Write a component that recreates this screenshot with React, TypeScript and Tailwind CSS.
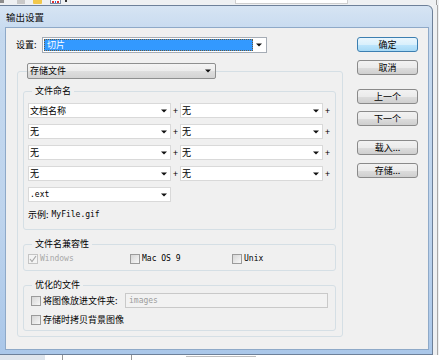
import React from "react";

function Arrow() {
  return (
    <svg width="6" height="4" viewBox="0 0 6 4">
      <path d="M0 0.5H6L3 3.5Z" fill="#111" />
    </svg>
  );
}

function Combo({ text, w, mono }: { text: string; w: string; mono?: boolean }) {
  return (
    <div
      className={`flex h-[15px] items-center justify-between border border-[#d9d9d9] bg-white pl-[1px] pr-[3px] ${w}`}
    >
      <span
        className={
          mono
            ? "font-['DejaVu_Sans_Mono',monospace] text-[8px] leading-[12px]"
            : "text-[9px] leading-[12px]"
        }
      >
        {text}
      </span>
      <Arrow />
    </div>
  );
}

function Plus() {
  return <span className="flex w-[9px] justify-center text-[9px] leading-[12px]">+</span>;
}

function Check({ checked, disabled }: { checked?: boolean; disabled?: boolean }) {
  return (
    <span
      className={`flex h-[10px] w-[10px] shrink-0 items-center justify-center border ${
        disabled
          ? "border-[#c4c4c4] bg-[#f4f4f4]"
          : "border-[#9b9b9b] bg-[linear-gradient(135deg,#d6d6d6,#f7f7f7)]"
      }`}
    >
      {checked && (
        <svg width="8" height="8" viewBox="0 0 8 8">
          <path d="M1 4L3 6.5L7 1" fill="none" stroke="#a8a8a8" strokeWidth="1.2" />
        </svg>
      )}
    </span>
  );
}

function Btn({ label, primary }: { label: string; primary?: boolean }) {
  return (
    <div
      className={`flex h-[15px] w-[61px] items-center justify-center rounded-[3px] border text-[9px] leading-[12px] ${
        primary
          ? "border-[#3c7fb1] bg-[linear-gradient(#eaf6fd_0%,#d9f0fc_50%,#bee6fd_51%,#a7d9f5_100%)]"
          : "border-[#8a8a8a] bg-[linear-gradient(#f2f2f2_0%,#ebebeb_50%,#dddddd_51%,#cfcfcf_100%)]"
      }`}
    >
      {label}
    </div>
  );
}

function TopStrip() {
  return (
    <div className="flex h-[5px] items-start bg-[#eef0f2]">
      <div className="h-[3px] w-[4px] bg-[#8d8d8d]" />
      <div className="ml-[13px] h-[4px] w-[8px] bg-[#c9c9c9]" />
      <div className="ml-[8px] h-[4px] w-[9px] rounded-b-[1px] bg-[#f2c84b]" />
      <div className="ml-[8px] flex h-[4px] w-[11px] items-end gap-[1px] border-x border-b border-[#7e8fa6] bg-white px-[1px]">
        <span className="h-[2px] w-[2px] bg-[#d33]" />
        <span className="h-[2px] w-[2px] bg-[#36c]" />
        <span className="h-[2px] w-[2px] bg-[#d33]" />
      </div>
      <div className="ml-[4px] h-[2px] w-[2px] bg-[#333]" />
      <div className="ml-[168px] h-[4px] w-[113px] border-x border-b border-[#cfcfcf] bg-white" />
      <div className="ml-[88px] h-[5px] w-[1px] bg-[#9a9a9a]" />
    </div>
  );
}

function Dialog() {
  return (
    <div className="flex h-[350px] w-[433px] flex-col rounded-tr-[6px] border border-l-0 border-[#6d8099] bg-[linear-gradient(#d6e4f3,#c5d9ef_8%,#bed4ed_60%,#aac7e9)] pb-[4px] pl-[5px] pr-[3px]">
      <div className="flex h-[21px] items-center pl-[1px] text-[9.5px] leading-[12px] text-[#111]">
        输出设置
      </div>
      <div className="flex h-[323px] w-[424px] border border-[#8ea9c8] bg-[#f0f0f0] pl-[10px] pt-[9px]">
        <div className="flex w-[327px] flex-col">
          <div className="flex h-[16px] items-center">
            <span className="w-[26px] text-[9px] leading-[12px]">设置:</span>
            <div className="flex h-[16px] w-[225px] items-center border border-[#a5acb5] bg-white pl-[1px] pr-[4px]">
              <div className="flex h-[12px] w-[209px] items-center border border-dotted border-[#6d5a3a] bg-[#3399ff] pl-[2px] text-[9px] leading-[12px] text-white">
                切片
              </div>
              <div className="flex flex-1 justify-end">
                <Arrow />
              </div>
            </div>
          </div>

          <fieldset className="ml-[1px] mt-[10px] w-[326px] rounded-[3px] border border-[#d5dfe5]">
            <legend className="ml-[9px]">
              <div className="flex h-[16px] w-[189px] items-center justify-between rounded-[2px] border border-[#8e8f8f] bg-[linear-gradient(#f4f4f4_0%,#ececec_50%,#dedede_51%,#d3d3d3_100%)] pl-[2px] pr-[4px] text-[9px] leading-[12px]">
                <span>存储文件</span>
                <Arrow />
              </div>
            </legend>
            <div className="flex flex-col pb-[5px] pl-[5px] pt-[6px]">
              <fieldset className="w-[313px] rounded-[3px] border border-[#d5dfe5]">
                <legend className="ml-[8px] px-[3px] text-[9px] leading-[12px]">文件命名</legend>
                <div className="flex flex-col gap-[6px] pb-[8px] pl-[4px] pt-[6px]">
                  <div className="flex items-center">
                    <Combo text="文档名称" w="w-[143px]" />
                    <Plus />
                    <Combo text="无" w="w-[143px]" />
                    <Plus />
                  </div>
                  {[0, 1, 2].map((i) => (
                    <div key={i} className="flex items-center">
                      <Combo text="无" w="w-[143px]" />
                      <Plus />
                      <Combo text="无" w="w-[143px]" />
                      <Plus />
                    </div>
                  ))}
                  <Combo text=".ext" w="w-[143px]" mono />
                  <div className="mt-[1px] flex items-center text-[9px] leading-[12px]">
                    <span>示例:</span>
                    <span className="ml-[3px] font-['DejaVu_Sans_Mono',monospace] text-[8px]">MyFile.gif</span>
                  </div>
                </div>
              </fieldset>

              <fieldset className="mt-[8px] w-[313px] rounded-[3px] border border-[#d5dfe5]">
                <legend className="ml-[8px] px-[3px] text-[9px] leading-[12px]">文件名兼容性</legend>
                <div className="grid grid-cols-[102px_102px_auto] pb-[5px] pl-[4px] pt-[3px] font-['DejaVu_Sans_Mono',monospace] text-[8px] leading-[12px]">
                  <div className="flex h-[12px] items-center gap-[2px] text-[#a8a8a8]">
                    <Check checked disabled />
                    <span>Windows</span>
                  </div>
                  <div className="flex h-[12px] items-center gap-[2px]">
                    <Check />
                    <span>Mac OS 9</span>
                  </div>
                  <div className="flex h-[12px] items-center gap-[2px]">
                    <Check />
                    <span>Unix</span>
                  </div>
                </div>
              </fieldset>

              <fieldset className="mt-[8px] w-[313px] rounded-[3px] border border-[#d5dfe5]">
                <legend className="ml-[8px] px-[3px] text-[9px] leading-[12px]">优化的文件</legend>
                <div className="flex flex-col gap-[5px] pb-[3px] pl-[7px] pt-[2px] text-[9px] leading-[12px]">
                  <div className="flex h-[15px] items-center">
                    <Check />
                    <span className="ml-[2px] w-[82px]">将图像放进文件夹:</span>
                    <div className="flex h-[15px] w-[203px] items-center border border-[#c9c9c9] bg-[#f2f2f2] pl-[3px] font-['DejaVu_Sans_Mono',monospace] text-[8px] text-[#9d9d9d]">
                      images
                    </div>
                  </div>
                  <div className="flex h-[14px] items-center">
                    <Check />
                    <span className="ml-[2px]">存储时拷贝背景图像</span>
                  </div>
                </div>
              </fieldset>
            </div>
          </fieldset>
        </div>

        <div className="ml-[14px] flex flex-col">
          <Btn label="确定" primary />
          <div className="mt-[8px]">
            <Btn label="取消" />
          </div>
          <div className="mt-[14px]">
            <Btn label="上一个" />
          </div>
          <div className="mt-[7px]">
            <Btn label="下一个" />
          </div>
          <div className="mt-[14px]">
            <Btn label="载入..." />
          </div>
          <div className="mt-[8px]">
            <Btn label="存储..." />
          </div>
        </div>
      </div>
    </div>
  );
}

export default function App() {
  return (
    <div className="flex h-[360px] w-[439px] flex-col overflow-hidden bg-[#f3f4f5] font-['Noto_Sans_CJK_SC',sans-serif] text-[9px] leading-[12px] text-black">
      <TopStrip />
      <div className="flex">
        <Dialog />
        <div className="flex flex-1 justify-end bg-[#eef0f2] pr-[1px]">
          <div className="h-full w-[1px] bg-[#a8a8a8]" />
        </div>
      </div>
      <div className="flex h-[5px] items-start bg-white">
        <div className="h-[5px] w-[45px] bg-[#dfe5ec]" />
        <div className="ml-[17px] h-[5px] w-[1px] bg-[#9a9a9a]" />
        <div className="ml-[68px] h-[5px] w-[1px] bg-[#9a9a9a]" />
        <div className="ml-[54px] mt-[1px] h-[4px] w-[70px] border-t border-[#bdbdbd]" />
      </div>
    </div>
  );
}
